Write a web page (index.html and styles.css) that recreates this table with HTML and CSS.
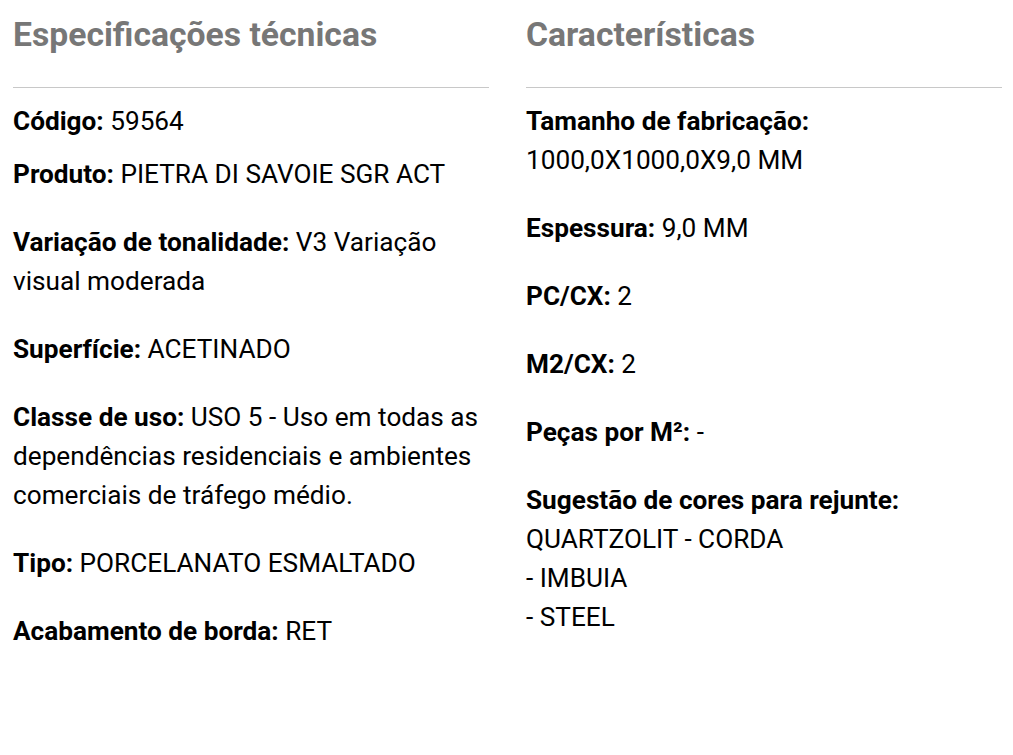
FILE: index.html
```html
<!DOCTYPE html>
<html lang="pt">
<head>
<meta charset="utf-8">
<link rel="stylesheet" href="styles.css">
</head>
<body>
<div class="specs">
  <section class="col">
    <h2 class="title">Especificações técnicas</h2>
    <div class="rule"></div>
    <p class="item first"><b>Código:</b> 59564</p>
    <p class="item second"><b>Produto:</b> PIETRA DI SAVOIE SGR ACT</p>
    <p class="item"><b>Variação de tonalidade:</b> V3 Variação visual moderada</p>
    <p class="item"><b>Superfície:</b> ACETINADO</p>
    <p class="item"><b>Classe de uso:</b> USO 5 - Uso em todas as dependências residenciais e ambientes comerciais de tráfego médio.</p>
    <p class="item"><b>Tipo:</b> PORCELANATO ESMALTADO</p>
    <p class="item"><b>Acabamento de borda:</b> RET</p>
  </section>
  <section class="col">
    <h2 class="title">Características</h2>
    <div class="rule"></div>
    <p class="item first"><b>Tamanho de fabricação:</b><br>1000,0X1000,0X9,0 MM</p>
    <p class="item"><b>Espessura:</b> 9,0 MM</p>
    <p class="item"><b>PC/CX:</b> 2</p>
    <p class="item"><b>M2/CX:</b> 2</p>
    <p class="item"><b>Peças por M²:</b> -</p>
    <p class="item"><b>Sugestão de cores para rejunte:</b><br>QUARTZOLIT - CORDA<br>- IMBUIA<br>- STEEL</p>
  </section>
</div>
</body>
</html>
```
FILE: styles.css
```css
html, body {
  margin: 0;
  padding: 0;
  background: #fff;
}
body {
  font-family: Roboto, "Liberation Sans", sans-serif;
  color: #000;
}
.specs {
  display: grid;
  grid-template-columns: 476px 476px;
  column-gap: 37px;
  padding: 0 12px 0 13px;
}
.title {
  margin: 0;
  padding-top: 14px;
  font-size: 33.7px;
  line-height: 42px;
  font-weight: 700;
  color: #777;
}
.rule {
  height: 1px;
  background: #c8c8c8;
  margin-top: 31px;
}
.item {
  margin: 29px 0 0;
  font-size: 26.2px;
  line-height: 39px;
}
.item b {
  font-weight: 700;
}
.item.first {
  margin-top: 14px;
}
.item.second {
  margin-top: 14px;
}
```
